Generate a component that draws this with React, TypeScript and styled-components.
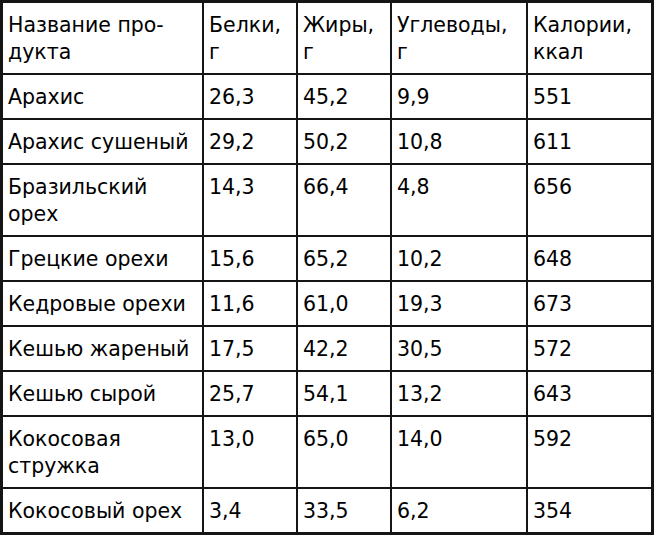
import React from "react";
import styled, { createGlobalStyle } from "styled-components";

const GlobalStyle = createGlobalStyle`
  html, body {
    margin: 0;
    padding: 0;
    background: #ffffff;
  }
`;

type Row = [string, string, string, string, string];

const header: Row = ["Название про-\nдукта", "Белки,\nг", "Жиры,\nг", "Углеводы,\nг", "Калории,\nккал"];

const rows: Row[] = [
  ["Арахис", "26,3", "45,2", "9,9", "551"],
  ["Арахис сушеный", "29,2", "50,2", "10,8", "611"],
  ["Бразильский\nорех", "14,3", "66,4", "4,8", "656"],
  ["Грецкие орехи", "15,6", "65,2", "10,2", "648"],
  ["Кедровые орехи", "11,6", "61,0", "19,3", "673"],
  ["Кешью жареный", "17,5", "42,2", "30,5", "572"],
  ["Кешью сырой", "25,7", "54,1", "13,2", "643"],
  ["Кокосовая\nстружка", "13,0", "65,0", "14,0", "592"],
  ["Кокосовый орех", "3,4", "33,5", "6,2", "354"],
];

const columnWidths = [201, 94, 94, 136, 123];

const App: React.FC = () => {
  return (
    <>
      <GlobalStyle />
      <Table>
        <colgroup>
          {columnWidths.map((w, i) => (
            <Col key={i} $width={w} />
          ))}
        </colgroup>
        <tbody>
          <tr>
            {header.map((cell, i) => (
              <Cell key={i}>{cell}</Cell>
            ))}
          </tr>
          {rows.map((row, r) => (
            <tr key={r}>
              {row.map((cell, i) => (
                <Cell key={i}>{cell}</Cell>
              ))}
            </tr>
          ))}
        </tbody>
      </Table>
    </>
  );
};

const Table = styled.table`
  width: 654px;
  table-layout: fixed;
  border-collapse: separate;
  border-spacing: 0;
  border: 3px solid #151515;
  box-sizing: border-box;
  font-family: "DejaVu Sans", "Liberation Sans", sans-serif;
  font-size: 20.5px;
  line-height: 27px;
  color: #000000;
  background: #ffffff;

  tr:last-child td {
    border-bottom: none;
  }
`;

const Col = styled.col<{ $width: number }>`
  width: ${(p) => p.$width}px;
`;

const Cell = styled.td`
  box-sizing: border-box;
  padding: 9px 2px 7px 5px;
  border-right: 2px solid #151515;
  border-bottom: 2px solid #151515;
  vertical-align: top;
  text-align: left;
  white-space: pre-line;
  overflow: hidden;

  &:last-child {
    border-right: none;
  }
`;

export default App;
